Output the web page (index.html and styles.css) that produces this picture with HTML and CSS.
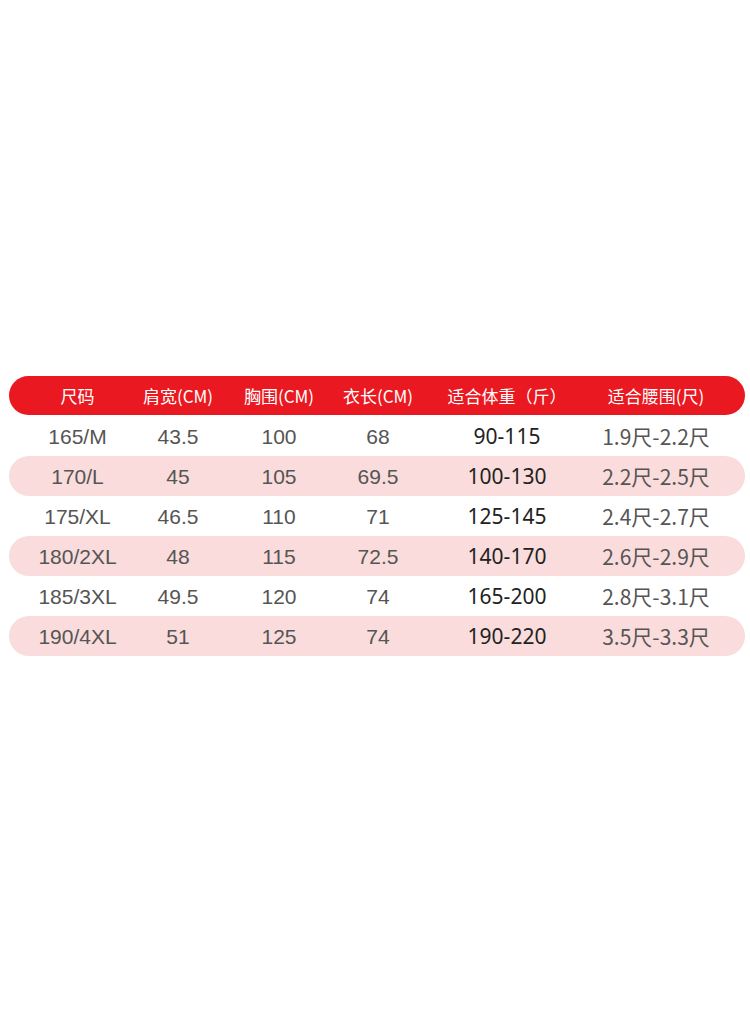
FILE: index.html
```html
<!DOCTYPE html>
<html lang="zh-CN">
<head>
<meta charset="utf-8">
<title>尺码表</title>
<link rel="stylesheet" href="styles.css">
</head>
<body>
<div class="page">
  <div class="table">
    <div class="row head">
      <div class="c">尺码</div><div class="c">肩宽(CM)</div><div class="c">胸围(CM)</div><div class="c">衣长(CM)</div><div class="c">适合体重（斤）</div><div class="c">适合腰围(尺)</div>
    </div>
    <div class="row">
      <div class="c">165/M</div><div class="c">43.5</div><div class="c">100</div><div class="c">68</div><div class="c w">90-115</div><div class="c z">1.9尺-2.2尺</div>
    </div>
    <div class="row pink">
      <div class="c">170/L</div><div class="c">45</div><div class="c">105</div><div class="c">69.5</div><div class="c w">100-130</div><div class="c z">2.2尺-2.5尺</div>
    </div>
    <div class="row">
      <div class="c">175/XL</div><div class="c">46.5</div><div class="c">110</div><div class="c">71</div><div class="c w">125-145</div><div class="c z">2.4尺-2.7尺</div>
    </div>
    <div class="row pink">
      <div class="c">180/2XL</div><div class="c">48</div><div class="c">115</div><div class="c">72.5</div><div class="c w">140-170</div><div class="c z">2.6尺-2.9尺</div>
    </div>
    <div class="row">
      <div class="c">185/3XL</div><div class="c">49.5</div><div class="c">120</div><div class="c">74</div><div class="c w">165-200</div><div class="c z">2.8尺-3.1尺</div>
    </div>
    <div class="row pink">
      <div class="c">190/4XL</div><div class="c">51</div><div class="c">125</div><div class="c">74</div><div class="c w">190-220</div><div class="c z">3.5尺-3.3尺</div>
    </div>
  </div>
</div>
</body>
</html>
```
FILE: styles.css
```css
html, body {
  margin: 0;
  padding: 0;
  background: #ffffff;
}
.page {
  width: 750px;
  height: 1027px;
  padding-top: 376px;
  box-sizing: border-box;
}
.table {
  margin: 0 5px 0 9px;
  display: flex;
  flex-direction: column;
}
.row {
  display: grid;
  grid-template-columns: 100px 101px 101px 97px 161px 137px;
  padding: 0 20.5px 0 18.5px;
  height: 40px;
  align-items: center;
  border-radius: 20px;
  font-family: "Liberation Sans", Arial, sans-serif;
  font-size: 21px;
  color: #555555;
}
.row.head {
  height: 39px;
  margin-bottom: 1px;
  background: #ea1820;
  color: #ffffff;
  font-family: "Noto Sans CJK SC", "Noto Sans", sans-serif;
  font-size: 17px;
}
.row.pink {
  background: #fadcdc;
}
.c {
  text-align: center;
  white-space: nowrap;
  line-height: 1;
}
.c.w {
  font-family: "Noto Sans", "Noto Sans CJK SC", sans-serif;
  color: #222222;
}
.c.z {
  font-family: "Noto Sans CJK SC", "Noto Sans", sans-serif;
  color: #555555;
}
```
